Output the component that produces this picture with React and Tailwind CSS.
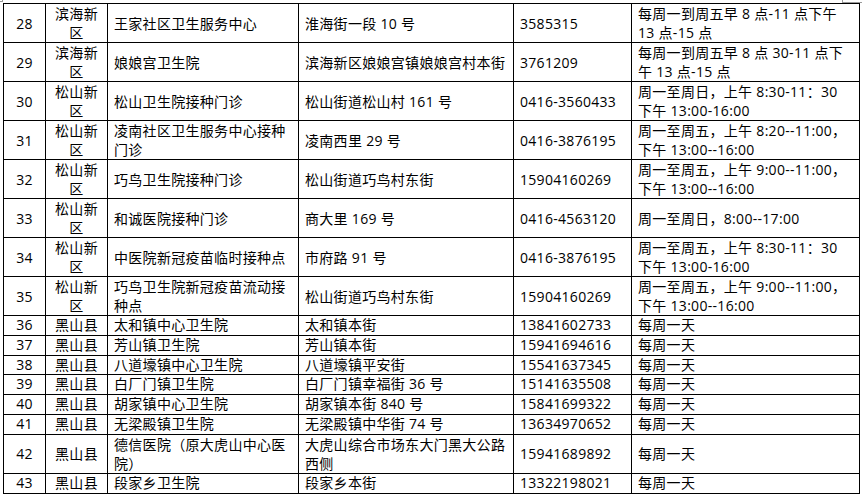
const rows = [
  ['28', ['滨海新', '区'], ['王家社区卫生服务中心'], ['淮海街一段 10 号'], '3585315', ['每周一到周五早 8 点-11 点下午', '13 点-15 点']],
  ['29', ['滨海新', '区'], ['娘娘宫卫生院'], ['滨海新区娘娘宫镇娘娘宫村本街'], '3761209', ['每周一到周五早 8 点 30-11 点下', '午 13 点-15 点']],
  ['30', ['松山新', '区'], ['松山卫生院接种门诊'], ['松山街道松山村 161 号'], '0416-3560433', ['周一至周日，上午 8:30-11：30', '下午 13:00-16:00']],
  ['31', ['松山新', '区'], ['凌南社区卫生服务中心接种', '门诊'], ['凌南西里 29 号'], '0416-3876195', ['周一至周五，上午 8:20--11:00，', '下午 13:00--16:00']],
  ['32', ['松山新', '区'], ['巧鸟卫生院接种门诊'], ['松山街道巧鸟村东街'], '15904160269', ['周一至周五，上午 9:00--11:00，', '下午 13:00--16:00']],
  ['33', ['松山新', '区'], ['和诚医院接种门诊'], ['商大里 169 号'], '0416-4563120', ['周一至周日，8:00--17:00']],
  ['34', ['松山新', '区'], ['中医院新冠疫苗临时接种点'], ['市府路 91 号'], '0416-3876195', ['周一至周五，上午 8:30-11：30', '下午 13:00-16:00']],
  ['35', ['松山新', '区'], ['巧鸟卫生院新冠疫苗流动接', '种点'], ['松山街道巧鸟村东街'], '15904160269', ['周一至周五，上午 9:00--11:00，', '下午 13:00--16:00']],
  ['36', ['黑山县'], ['太和镇中心卫生院'], ['太和镇本街'], '13841602733', ['每周一天']],
  ['37', ['黑山县'], ['芳山镇卫生院'], ['芳山镇本街'], '15941694616', ['每周一天']],
  ['38', ['黑山县'], ['八道壕镇中心卫生院'], ['八道壕镇平安街'], '15541637345', ['每周一天']],
  ['39', ['黑山县'], ['白厂门镇卫生院'], ['白厂门镇幸福街 36 号'], '15141635508', ['每周一天']],
  ['40', ['黑山县'], ['胡家镇中心卫生院'], ['胡家镇本街 840 号'], '15841699322', ['每周一天']],
  ['41', ['黑山县'], ['无梁殿镇卫生院'], ['无梁殿镇中华街 74 号'], '13634970652', ['每周一天']],
  ['42', ['黑山县'], ['德信医院（原大虎山中心医', '院）'], ['大虎山综合市场东大门黑大公路', '西侧'], '15941689892', ['每周一天']],
  ['43', ['黑山县'], ['段家乡卫生院'], ['段家乡本街'], '13322198021', ['每周一天']],
]

function Lines({ lines }) {
  return lines.map((l, i) => (
    <div key={i} className="whitespace-nowrap">
      {l}
    </div>
  ))
}

export default function App() {
  return (
    <div
      className="relative h-[494px] w-[862px] overflow-hidden bg-white pl-[3px] pt-[3px] text-[14px] leading-[19px] tracking-[0.3px] text-black"
      style={{ fontFamily: '"Open Sans", "Noto Sans CJK SC", sans-serif' }}
    >
      {/* page corner marks */}
      <span className="absolute left-0 top-[1px] h-px w-[3px] bg-[#9a9a9a]" />
      <span className="absolute left-[2px] top-0 h-[2px] w-px bg-[#9a9a9a]" />
      <span className="absolute left-[842px] top-0 h-[2px] w-px bg-[#9a9a9a]" />
      <span className="absolute left-[842px] top-[2px] h-px w-[20px] bg-[#9a9a9a]" />

      <table className="w-[856px] table-fixed border-collapse">
        <colgroup>
          <col className="w-[42px]" />
          <col className="w-[62px]" />
          <col className="w-[191px]" />
          <col className="w-[215px]" />
          <col className="w-[118px]" />
          <col className="w-[228px]" />
        </colgroup>
        <tbody>
          {rows.map(([no, district, name, addr, phone, hours]) => {
            const tall = district.length > 1 || name.length > 1 || addr.length > 1
            return (
              <tr key={no} className={tall ? '' : 'leading-[18.8px]'}>
                <td className="border border-black p-0 text-center align-middle">{no}</td>
                <td className="border border-black p-0 text-center align-middle">
                  <Lines lines={district} />
                </td>
                <td className="border border-black px-[6px] py-0 align-middle">
                  <Lines lines={name} />
                </td>
                <td className="border border-black px-[6px] py-0 align-middle">
                  <Lines lines={addr} />
                </td>
                <td className="border border-black px-[6px] py-0 align-middle">{phone}</td>
                <td className="border border-black px-[6px] py-0 align-middle">
                  <Lines lines={hours} />
                </td>
              </tr>
            )
          })}
        </tbody>
      </table>
    </div>
  )
}
